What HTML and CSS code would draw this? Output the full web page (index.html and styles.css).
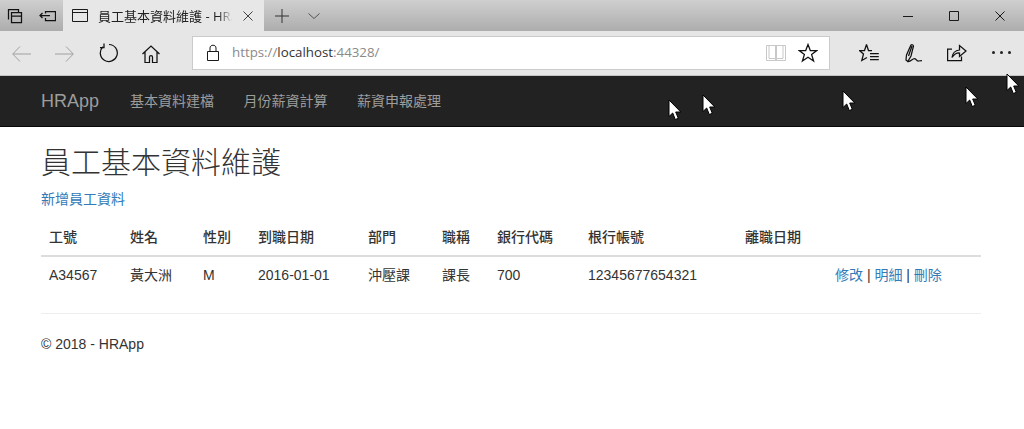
FILE: index.html
```html
<!DOCTYPE html>
<html lang="zh-Hant">
<head>
<meta charset="utf-8">
<title>員工基本資料維護 - HRApp</title>
<link rel="stylesheet" href="styles.css">
</head>
<body>
<div class="titlebar">
  <div class="tab-tools">
    <svg class="ic heavy" width="16" height="16" viewBox="0 0 16 16"><path d="M1.500 11.500V1.500H11.500V4.500M4.500 4.500H14.500V14.500H4.500ZM4.500 8H14.500"/></svg>
    <svg class="ic heavy" width="17" height="12" viewBox="0 0 17 12"><path d="M11 5.500H1M3.500 3L1 5.500L3.500 8M6.500 3.500V1.500H16.500V10.500H6.500V8"/></svg>
  </div>
  <div class="tab">
    <svg class="ic" width="16" height="13" viewBox="0 0 16 13"><path d="M.5 .5H15.500V12.500H.5ZM.5 3.500H15.500"/></svg>
    <span class="tab-title">員工基本資料維護 - HRApp</span>
    <svg class="ic tab-close" width="10" height="10" viewBox="0 0 10 10"><path d="M.5 .5L9.500 9.500M9.500 .5L.5 9.500"/></svg>
  </div>
  <div class="tab-new">
    <svg class="ic" width="14" height="14" viewBox="0 0 14 14"><path d="M7 0V14M0 7H14"/></svg>
    <svg class="ic chev" width="12" height="6" viewBox="0 0 12 6"><path d="M.5 .5L6 5.500L11.500 .5"/></svg>
  </div>
  <div class="win-controls">
    <svg class="ic" width="10" height="10" viewBox="0 0 10 10"><path d="M0 5.500H10"/></svg>
    <svg class="ic" width="10" height="10" viewBox="0 0 10 10"><path d="M.5 .5H9.500V9.500H.5Z"/></svg>
    <svg class="ic" width="10" height="10" viewBox="0 0 10 10"><path d="M.5 .5L9.500 9.500M9.500 .5L.5 9.500"/></svg>
  </div>
</div>
<div class="toolbar">
  <div class="nav-buttons">
    <svg class="ic dim" width="19" height="20" viewBox="0 0 19 20"><path d="M1 11H19M8 3.500L.7 11L8 18.500"/></svg>
    <svg class="ic dim" width="19" height="20" viewBox="0 0 19 20"><path d="M0 11H18M11 3.500L18.300 11L11 18.500"/></svg>
    <svg class="ic heavy" width="20" height="20" viewBox="0 0 20 20"><path d="M11 1.500A8.500 8.500 0 1 1 5 3.800M6 .5V4.500H2"/></svg>
    <svg class="ic heavy" width="18" height="20" viewBox="0 0 18 20"><path d="M.5 11L9 3L17.500 11M3 9V19.500H7.500V14C7.500 12 10.500 12 10.500 14V19.500H15V9"/></svg>
  </div>
  <div class="address">
    <svg class="ic lock" width="12" height="17" viewBox="0 0 12 17"><path d="M.5 7.500H11.500V16.500H.5ZM3 7.500V4C3 .3 9 .3 9 4V7.500"/></svg>
    <span class="url">https://<b class="host">localhost</b>:44328/</span>
    <svg class="ic book" width="20" height="18" viewBox="0 0 20 18"><path d="M.5 1.500H19.500V16.500H.5ZM3 1.500V14.500H9.500V1.500M10.500 1.500V14.500H17V1.500M9.500 14.500V16.500M10.500 14.500V16.500"/></svg>
    <svg class="ic heavy" width="20" height="20" viewBox="0 0 20 20"><path d="M10 1.500L12.300 7.500H18.800L13.600 11.400L15.600 18L10 14.200L4.400 18L6.400 11.400L1.200 7.500H7.700Z"/></svg>
  </div>
  <div class="hub">
    <svg class="ic heavy" width="20" height="20" viewBox="0 0 20 20"><path d="M7.500 1.500L9.500 7.500H13M7.500 1.500L5.500 7.500H.5L4.500 11L2.800 17.500L8 14.500M11 10.500H19.800M11 13.500H19.800M11 16.500H19.800"/></svg>
    <svg class="ic heavy" width="18" height="20" viewBox="0 0 18 20"><path d="M2 17L2.500 12L7 2Q8.500 1 9.500 3L7 13L3.800 18.500ZM4.500 13L8 3M3.800 18.500C7 19 8 15.500 10.500 15.500C12 15.500 12.500 18.500 14.500 18L18 17.500"/></svg>
    <svg class="ic heavy" width="20" height="18" viewBox="0 0 20 18"><path d="M5 5H.6V16.500H14.500V12.500M5 13.500C5.500 9 8 6.500 12.500 6V1.500L19 7L12.500 12.500V9C9.500 8.800 7 10.500 5 13.500Z"/></svg>
    <div class="dots"><span></span><span></span><span></span></div>
  </div>
</div>
<nav class="navbar">
  <a class="brand" href="#">HRApp</a>
  <a class="nav-link" href="#">基本資料建檔</a>
  <a class="nav-link" href="#">月份薪資計算</a>
  <a class="nav-link" href="#">薪資申報處理</a>
</nav>
<main class="content">
  <h2 class="page-title">員工基本資料維護</h2>
  <p class="create"><a href="#">新增員工資料</a></p>
  <table class="data">
    <thead>
      <tr>
        <th class="c1">工號</th><th class="c2">姓名</th><th class="c3">性別</th><th class="c4">到職日期</th><th class="c5">部門</th><th class="c6">職稱</th><th class="c7">銀行代碼</th><th class="c8">根行帳號</th><th class="c9">離職日期</th><th class="c10"></th>
      </tr>
    </thead>
    <tbody>
      <tr>
        <td>A34567</td><td>黃大洲</td><td>M</td><td>2016-01-01</td><td>沖壓課</td><td>課長</td><td>700</td><td>12345677654321</td><td></td>
        <td><a href="#">修改</a> | <a href="#">明細</a> | <a href="#">刪除</a></td>
      </tr>
    </tbody>
  </table>
  <hr class="rule">
  <footer class="foot">© 2018 - HRApp</footer>
</main>
<svg class="cursor cur1" width="14" height="22" viewBox="0 0 14 22"><path d="M1 1V17.500L4.700 14L7.300 20.500L10.300 19.300L7.700 13H12.800Z"/></svg>
<svg class="cursor cur2" width="14" height="22" viewBox="0 0 14 22"><path d="M1 1V17.500L4.700 14L7.300 20.500L10.300 19.300L7.700 13H12.800Z"/></svg>
<svg class="cursor cur3" width="14" height="22" viewBox="0 0 14 22"><path d="M1 1V17.500L4.700 14L7.300 20.500L10.300 19.300L7.700 13H12.800Z"/></svg>
<svg class="cursor cur4" width="14" height="22" viewBox="0 0 14 22"><path d="M1 1V17.500L4.700 14L7.300 20.500L10.300 19.300L7.700 13H12.800Z"/></svg>
<svg class="cursor cur5" width="14" height="22" viewBox="0 0 14 22"><path d="M1 1V17.500L4.700 14L7.300 20.500L10.300 19.300L7.700 13H12.800Z"/></svg>
</body>
</html>
```
FILE: styles.css
```css
* { box-sizing: border-box; }
html, body { margin: 0; height: 429px; overflow: hidden; }
body {
  position: relative;
  background: #fff;
  color: #333;
  font: 14px/20px "Liberation Sans", "Noto Sans CJK TC", sans-serif;
}
a { color: #337ab7; text-decoration: none; }
.ic { display: block; flex: none; fill: none; stroke: #1a1a1a; stroke-width: 1; }
.heavy { stroke-width: 1.25; stroke: #111; }
.dim { stroke: #a0a0a0; }

.titlebar {
  display: flex;
  height: 31px;
  background: linear-gradient(#cfcfcf, #adadad);
}
.tab-tools { display: flex; align-items: center; gap: 16px; width: 63px; padding-left: 7px; }
.tab {
  display: flex;
  align-items: center;
  width: 201px;
  padding-left: 9px;
  background: #e7e7e7;
}
.tab-title {
  width: 134px;
  margin-left: 10px;
  overflow: hidden;
  white-space: nowrap;
  color: #222;
  font: 13px/20px "Open Sans", "Noto Sans CJK TC", sans-serif;
  -webkit-mask-image: linear-gradient(to right, #000 90%, transparent);
  mask-image: linear-gradient(to right, #000 90%, transparent);
}
.tab-close { margin-left: 11px; stroke: #444; }
.tab-new { display: flex; align-items: center; gap: 19px; padding-left: 11px; }
.tab-new .ic { stroke: #333; }
.tab-new .chev { stroke: #555; }
.win-controls { display: flex; align-items: center; gap: 36px; margin-left: auto; padding-right: 19px; }

.toolbar {
  display: flex;
  align-items: center;
  height: 45px;
  padding-bottom: 1px;
  background: #e6e6e6;
  border-bottom: 1px solid #c4c4c4;
}
.nav-buttons { display: flex; align-items: center; gap: 24px; width: 192px; padding-left: 12px; }
.address {
  display: flex;
  align-items: center;
  width: 638px;
  height: 34px;
  padding: 0 11px 0 14px;
  background: #fff;
  border: 1px solid #cbcbcb;
}
.url {
  flex: 1;
  margin-left: 13px;
  padding-bottom: 2px;
  color: #8a8a8a;
  font: 13.3px/20px "Open Sans", sans-serif;
}
.host { color: #333; font-weight: 400; }
.book { stroke: #c8c8c8; margin-right: 12px; }
.hub { display: flex; align-items: center; gap: 25px; padding-left: 29px; }
.dots { display: flex; gap: 5px; }
.dots span { width: 3px; height: 3px; background: #222; border-radius: 50%; }

.navbar {
  display: flex;
  align-items: center;
  height: 51px;
  padding-left: 41px;
  background: #222;
  border-bottom: 1px solid #080808;
}
.navbar a { color: #9d9d9d; }
.brand { font-size: 18px; margin-right: 31px; }
.nav-link { margin-right: 29.5px; }

.content { padding: 0 43px 0 41px; }
.page-title {
  margin: 19px 0 10px;
  height: 33px;
  color: #333;
  font-size: 30px;
  font-weight: 300;
  line-height: 33px;
}
.create { height: 20px; margin: 0 0 10px; }
.data { width: 940px; border-collapse: collapse; table-layout: fixed; }
.data th, .data td { height: 36px; padding: 8px; text-align: left; vertical-align: top; white-space: nowrap; }
.data th { height: 37px; padding-bottom: 7px; font-weight: 500; border-bottom: 2px solid #ddd; }
.c1 { width: 81px; }
.c2 { width: 73px; }
.c3 { width: 55px; }
.c4 { width: 110px; }
.c5 { width: 74px; }
.c6 { width: 55px; }
.c7 { width: 91px; }
.c8 { width: 157px; }
.c9 { width: 90px; }
.c10 { width: 154px; }
.rule { width: 940px; height: 1px; margin: 20px 0; border: 0; background: #eee; }
.foot { height: 20px; }

.cursor { position: absolute; fill: #fff; stroke: #000; stroke-width: 1; }
.cur1 { left: 668px; top: 99px; }
.cur2 { left: 702px; top: 94px; }
.cur3 { left: 842px; top: 90px; }
.cur4 { left: 965px; top: 86px; }
.cur5 { left: 1006px; top: 73px; }
```
